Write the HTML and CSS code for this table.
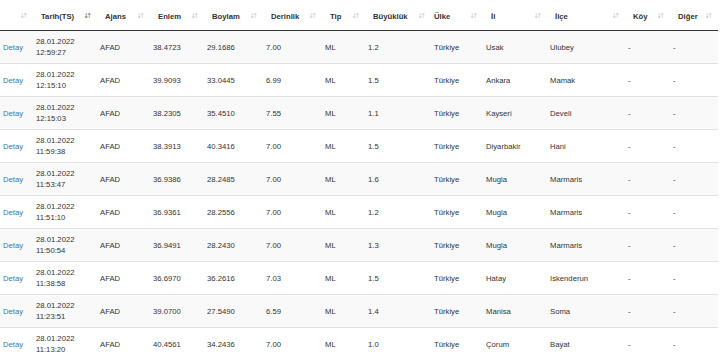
FILE: index.html
```html
<!DOCTYPE html>
<html lang="tr">
<head>
    <meta charset="UTF-8">
    <meta name="viewport" content="width=device-width, initial-scale=1.0">
    <title>Son Depremler</title>
    <link rel="stylesheet" href="styles.css">
</head>
<body>
    <table class="quake-table">
        <thead>
            <tr>
                <th class="sorting"></th>
                <th class="sorting sorting-desc">Tarih(TS)</th>
                <th class="sorting">Ajans</th>
                <th class="sorting">Enlem</th>
                <th class="sorting">Boylam</th>
                <th class="sorting">Derinlik</th>
                <th class="sorting">Tip</th>
                <th class="sorting">Büyüklük</th>
                <th class="sorting">Ülke</th>
                <th class="sorting">İl</th>
                <th class="sorting">İlçe</th>
                <th class="sorting">Köy</th>
                <th class="sorting">Diğer</th>
            </tr>
        </thead>
        <tbody>
            <tr>
                <td><a href="#">Detay</a></td>
                <td>28.01.2022<br>12:59:27</td>
                <td>AFAD</td><td>38.4723</td><td>29.1686</td><td>7.00</td><td>ML</td><td>1.2</td>
                <td>Türkiye</td><td>Usak</td><td>Ulubey</td><td>-</td><td>-</td>
            </tr>
            <tr>
                <td><a href="#">Detay</a></td>
                <td>28.01.2022<br>12:15:10</td>
                <td>AFAD</td><td>39.9093</td><td>33.0445</td><td>6.99</td><td>ML</td><td>1.5</td>
                <td>Türkiye</td><td>Ankara</td><td>Mamak</td><td>-</td><td>-</td>
            </tr>
            <tr>
                <td><a href="#">Detay</a></td>
                <td>28.01.2022<br>12:15:03</td>
                <td>AFAD</td><td>38.2305</td><td>35.4510</td><td>7.55</td><td>ML</td><td>1.1</td>
                <td>Türkiye</td><td>Kayseri</td><td>Develi</td><td>-</td><td>-</td>
            </tr>
            <tr>
                <td><a href="#">Detay</a></td>
                <td>28.01.2022<br>11:59:38</td>
                <td>AFAD</td><td>38.3913</td><td>40.3416</td><td>7.00</td><td>ML</td><td>1.5</td>
                <td>Türkiye</td><td>Diyarbakir</td><td>Hani</td><td>-</td><td>-</td>
            </tr>
            <tr>
                <td><a href="#">Detay</a></td>
                <td>28.01.2022<br>11:53:47</td>
                <td>AFAD</td><td>36.9386</td><td>28.2485</td><td>7.00</td><td>ML</td><td>1.6</td>
                <td>Türkiye</td><td>Mugla</td><td>Marmaris</td><td>-</td><td>-</td>
            </tr>
            <tr>
                <td><a href="#">Detay</a></td>
                <td>28.01.2022<br>11:51:10</td>
                <td>AFAD</td><td>36.9361</td><td>28.2556</td><td>7.00</td><td>ML</td><td>1.2</td>
                <td>Türkiye</td><td>Mugla</td><td>Marmaris</td><td>-</td><td>-</td>
            </tr>
            <tr>
                <td><a href="#">Detay</a></td>
                <td>28.01.2022<br>11:50:54</td>
                <td>AFAD</td><td>36.9491</td><td>28.2430</td><td>7.00</td><td>ML</td><td>1.3</td>
                <td>Türkiye</td><td>Mugla</td><td>Marmaris</td><td>-</td><td>-</td>
            </tr>
            <tr>
                <td><a href="#">Detay</a></td>
                <td>28.01.2022<br>11:38:58</td>
                <td>AFAD</td><td>36.6970</td><td>36.2616</td><td>7.03</td><td>ML</td><td>1.5</td>
                <td>Türkiye</td><td>Hatay</td><td>Iskenderun</td><td>-</td><td>-</td>
            </tr>
            <tr>
                <td><a href="#">Detay</a></td>
                <td>28.01.2022<br>11:23:51</td>
                <td>AFAD</td><td>39.0700</td><td>27.5490</td><td>6.59</td><td>ML</td><td>1.4</td>
                <td>Türkiye</td><td>Manisa</td><td>Soma</td><td>-</td><td>-</td>
            </tr>
            <tr>
                <td><a href="#">Detay</a></td>
                <td>28.01.2022<br>11:13:20</td>
                <td>AFAD</td><td>40.4561</td><td>34.2436</td><td>7.00</td><td>ML</td><td>1.0</td>
                <td>Türkiye</td><td>Çorum</td><td>Bayat</td><td>-</td><td>-</td>
            </tr>
        </tbody>
    </table>
</body>
</html>
```

FILE: styles.css
```css
body {
    margin: 0;
    font-family: 'Liberation Sans', Arial, sans-serif;
    font-size: 7.7px;
    line-height: 11px;
    color: #333;
    background-color: #fff;
}

.quake-table {
    width: 718px;
    border-collapse: collapse;
    table-layout: fixed;
}

.quake-table th,
.quake-table td {
    box-sizing: border-box;
}

.quake-table th {
    position: relative;
    text-align: left;
    font-weight: bold;
    padding: 11px 3px 8px 8px;
    border-bottom: 1px solid #333;
    white-space: nowrap;
}

.quake-table td {
    padding: 5px 3px;
    border-top: 1px solid #e2e2e2;
    vertical-align: middle;
    white-space: nowrap;
}

.quake-table tbody tr:nth-child(odd) {
    background-color: #f9f9f9;
}

.quake-table a {
    color: #337ab7;
    text-decoration: none;
}

/* sort arrows like datatables */
.sorting::after {
    content: "\2193\2191";
    position: absolute;
    right: 8px;
    top: 11px;
    font-family: 'DejaVu Sans', sans-serif;
    font-size: 7px;
    line-height: 11px;
    letter-spacing: -3px;
    color: #c8c8c8;
    font-weight: normal;
}

.sorting-desc::after {
    color: #666;
}

/* column widths */
.quake-table th:nth-child(1) { width: 33px; }
.quake-table th:nth-child(2) { width: 64px; }
.quake-table th:nth-child(3) { width: 53px; }
.quake-table th:nth-child(4) { width: 54px; }
.quake-table th:nth-child(5) { width: 59px; }
.quake-table th:nth-child(6) { width: 59px; }
.quake-table th:nth-child(7) { width: 43px; }
.quake-table th:nth-child(8) { width: 66px; }
.quake-table th:nth-child(9) { width: 52px; }
.quake-table th:nth-child(10) { width: 64px; }
.quake-table th:nth-child(11) { width: 78px; }
.quake-table th:nth-child(12) { width: 45px; }
.quake-table th:nth-child(13) { width: 48px; }

.quake-table th:nth-child(9) {
    padding-left: 3px;
}
```
